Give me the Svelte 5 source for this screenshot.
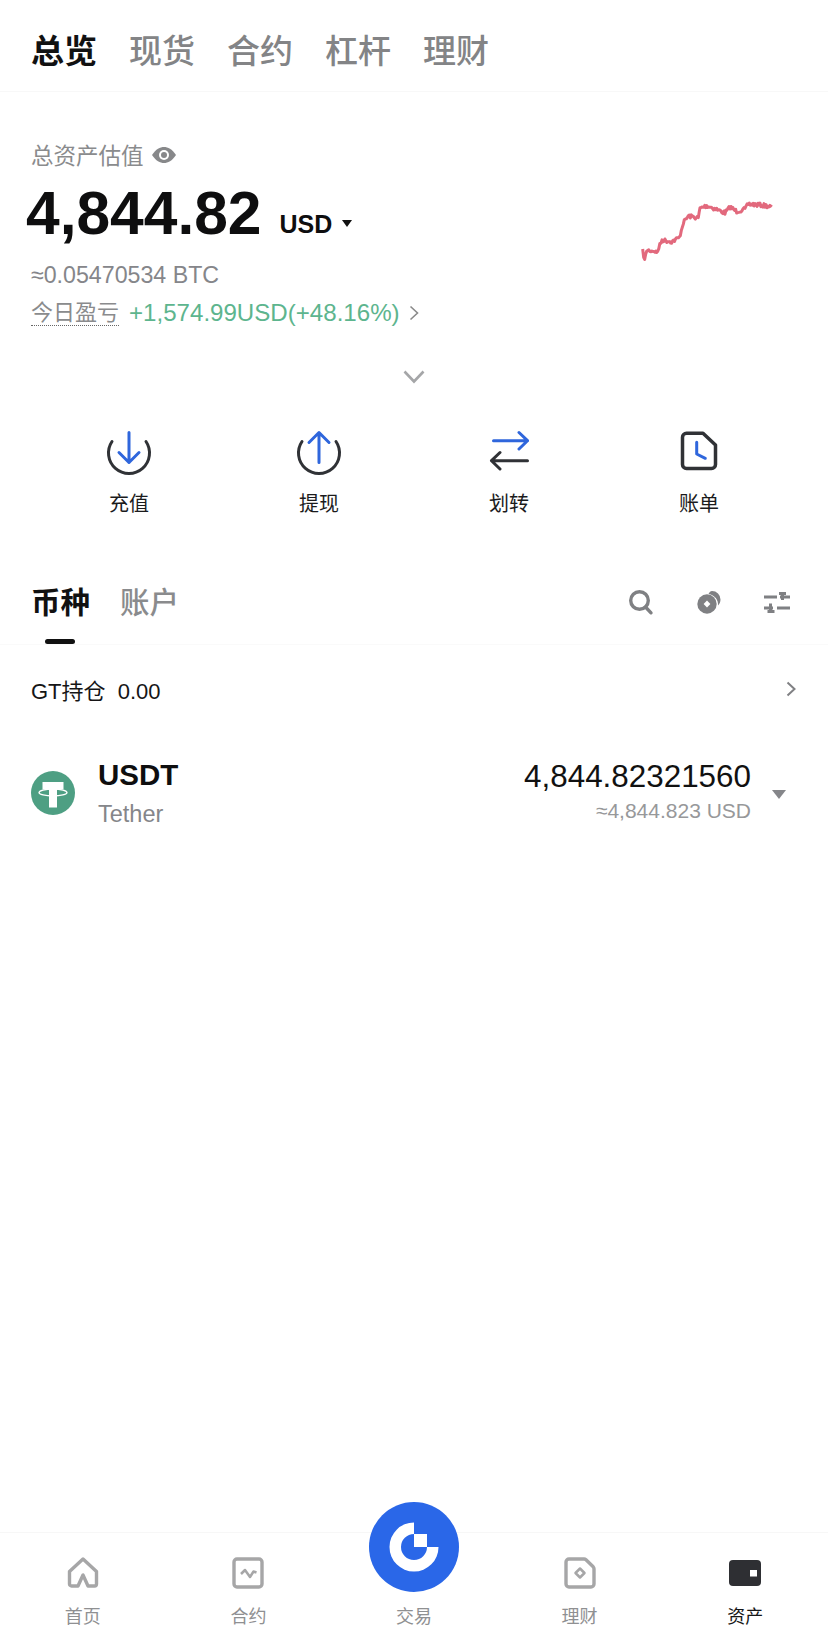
<script>
  const tabs = ['总览', '现货', '合约', '杠杆', '理财'];
  const anchors = [[128,240],[134,268],[140,238],[165,240],[170,246],[186,207],[215,212],[238,200],[250,155],[265,135],[295,141],[300,112],[320,104],[350,115],[375,126],[390,108],[410,121],[435,115],[445,99],[480,102],[510,106],[518,114]];
  let seed = 7;
  function rnd() { seed = (seed * 16807) % 2147483647; return seed / 2147483647 - 0.5; }
  let pts = [];
  for (let i = 0; i < anchors.length - 1; i++) {
    const [x1, y1] = anchors[i], [x2, y2] = anchors[i + 1];
    const n = Math.max(2, Math.round((x2 - x1) / 3));
    for (let k = 0; k < n; k++) {
      const t = k / n;
      pts.push(`${(x1 + (x2 - x1) * t).toFixed(1)},${(y1 + (y2 - y1) * t + rnd() * 12).toFixed(1)}`);
    }
  }
  const spark = pts.join(' ');
</script>

<div class="page">
  <header class="top">
    {#each tabs as t, i}
      <span class="top-tab" class:on={i === 0}>{t}</span>
    {/each}
  </header>

  <section class="hero">
    <div class="hero-main">
      <div class="label">
        <span>总资产估值</span>
        <svg class="eye" viewBox="0 0 26 18" width="26" height="18"><path d="M1 9C5 3 9 1 13 1s8 2 12 8c-4 6-8 8-12 8S5 15 1 9z" fill="#87888a"/><circle cx="13" cy="9" r="5" fill="#fff"/><circle cx="13" cy="9" r="3" fill="#87888a"/></svg>
      </div>
      <div class="amount">
        <span class="num">4,844.82</span>
        <span class="cur">USD</span>
        <i class="tri"></i>
      </div>
      <div class="btc">≈0.05470534 BTC</div>
      <div class="pl">
        <span class="pl-label">今日盈亏</span>
        <span class="pl-val">+1,574.99USD(+48.16%)</span>
        <svg viewBox="0 0 10 16" width="10" height="16"><path d="M1.5 1.5 8.5 8l-7 6.5" fill="none" stroke="#8a8a8a" stroke-width="1.6"/></svg>
      </div>
    </div>
    <svg class="spark" viewBox="0 0 228 120" width="228" height="120">
      <g transform="scale(0.3333)">
        <polyline points={spark} fill="none" stroke="#e2697d" stroke-width="9" stroke-linejoin="round" />
      </g>
    </svg>
  </section>

  <div class="expand">
    <svg viewBox="0 0 24 16" width="24" height="16"><path d="M2.5 2.5 12 12.5l9.500-10" fill="none" stroke="#a5a6a8" stroke-width="2.600"/></svg>
  </div>

  <section class="actions">
    <div class="action">
      <svg viewBox="0 0 48 48" width="48" height="48" fill="none" stroke-width="3" stroke-linecap="round" stroke-linejoin="round">
        <path d="M7 14.500A20.500 20.500 0 1 0 41 14.500" stroke="#303236"/>
        <path d="M24 5.500V35.500M14 25.500l10 10 10-10" stroke="#2f66dc"/>
      </svg>
      <span>充值</span>
    </div>
    <div class="action">
      <svg viewBox="0 0 48 48" width="48" height="48" fill="none" stroke-width="3" stroke-linecap="round" stroke-linejoin="round">
        <path d="M7 14.500A20.500 20.500 0 1 0 41 14.500" stroke="#303236"/>
        <path d="M24 35.500V5.500M14 15.500l10-10 10 10" stroke="#2f66dc"/>
      </svg>
      <span>提现</span>
    </div>
    <div class="action">
      <svg viewBox="0 0 48 48" width="48" height="48" fill="none" stroke-width="3" stroke-linecap="round" stroke-linejoin="round">
        <path d="M8.500 13.700H42.500M34 5.500l8.500 8.200L34 22" stroke="#2f66dc"/>
        <path d="M42.500 33.700H7M15 25.500l-8.500 8.200L15 42" stroke="#303236"/>
      </svg>
      <span>划转</span>
    </div>
    <div class="action">
      <svg viewBox="0 0 48 48" width="48" height="48" fill="none" stroke-width="3.500" stroke-linecap="round" stroke-linejoin="round">
        <path d="M11.500 6.200H28L40.500 18V37.500a4 4 0 0 1-4 4H11.500a4 4 0 0 1-4-4V10.200a4 4 0 0 1 4-4z" stroke="#303236"/>
        <path d="M21.700 15.300V27l8.600 4.300" stroke="#2f66dc" stroke-width="3"/>
      </svg>
      <span>账单</span>
    </div>
  </section>

  <section class="list-head">
    <div class="list-tabs">
      <span class="list-tab on">币种<i class="bar"></i></span>
      <span class="list-tab">账户</span>
    </div>
    <div class="tools">
      <svg viewBox="0 0 28 28" width="28" height="28" fill="none" stroke="#7f8083" stroke-width="3.400"><circle cx="12.500" cy="12.500" r="8.800"/><path d="M18.500 19 24 24.800" stroke-linecap="round"/></svg>
      <svg viewBox="0 0 28 28" width="28" height="28"><path d="M17 3a8.500 8.500 0 0 1 8.500 8.500c0 2.500-1 4.600-2.500 6 .6-5.500-3.200-10.500-9.500-11.500C14.500 4 15.500 3 17 3z" fill="#7f8083"/><circle cx="12" cy="16" r="9.700" fill="#7f8083"/><rect x="9.600" y="13.600" width="4.800" height="4.800" fill="#fff" transform="rotate(45 12 16)"/></svg>
      <svg viewBox="0 0 28 28" width="28" height="28" fill="#7f8083"><rect x="1" y="7.500" width="13" height="3"/><rect x="17" y="7.500" width="10" height="3"/><rect x="16" y="4" width="7" height="3"/><rect x="18" y="4" width="3" height="8"/><rect x="1" y="18.500" width="9" height="3"/><rect x="14" y="18.500" width="13" height="3"/><rect x="6" y="15.500" width="3" height="9"/><rect x="4.500" y="22" width="7" height="3"/></svg>
    </div>
  </section>

  <section class="gt">
    <span>GT持仓&nbsp; 0.00</span>
    <svg viewBox="0 0 10 16" width="10" height="16"><path d="M1.500 1.500 8.500 8l-7 6.500" fill="none" stroke="#808184" stroke-width="2"/></svg>
  </section>

  <section class="coin">
    <svg class="tether" viewBox="0 0 44 44" width="44" height="44">
      <circle cx="22" cy="22" r="22" fill="#4e9f83"/>
      <path d="M11.500 11h21v7.500H26v18h-8v-18h-6.500z" fill="#fff"/>
      <ellipse cx="22" cy="21.500" rx="14" ry="3.500" fill="none" stroke="#fff" stroke-width="1.300"/>
    </svg>
    <div class="coin-name">
      <div class="sym">USDT</div>
      <div class="full">Tether</div>
    </div>
    <div class="coin-val">
      <div class="bal">4,844.82321560</div>
      <div class="usd">≈4,844.823 USD</div>
    </div>
    <i class="tri2"></i>
  </section>

  <nav class="nav">
    <div class="nav-item">
      <svg viewBox="0 0 34 34" width="34" height="34" fill="none" stroke="#a6a6a7" stroke-width="3.400" stroke-linejoin="round"><path d="M3.500 15.500 17 3l13.500 12.500V28a2 2 0 0 1-2 2H22L17 19l-5 11H5.500a2 2 0 0 1-2-2z"/></svg>
      <span>首页</span>
    </div>
    <div class="nav-item">
      <svg viewBox="0 0 34 34" width="34" height="34" fill="none" stroke="#a6a6a7" stroke-width="3.400" stroke-linejoin="round"><rect x="3" y="3" width="28" height="28" rx="3"/><path d="M10 18l4-4 5 7 3.500-5.500 3 1" stroke-width="2.500"/></svg>
      <span>合约</span>
    </div>
    <div class="nav-item trade">
      <svg class="fab" viewBox="0 0 90 90" width="90" height="90">
        <circle cx="45" cy="45" r="45" fill="#2a67e8"/>
        <path d="M45 20.500A24.500 24.500 0 1 0 69.500 45H58A13 13 0 1 1 45 32z" fill="#fff"/>
        <rect x="45" y="32" width="13" height="13" fill="#fff"/>
      </svg>
      <span>交易</span>
    </div>
    <div class="nav-item">
      <svg viewBox="0 0 34 34" width="34" height="34" fill="none" stroke="#a6a6a7" stroke-width="3.400" stroke-linejoin="round"><path d="M6 3h15a3 3 0 0 1 2 .8l7.200 7a3 3 0 0 1 .8 2V28a3 3 0 0 1-3 3H6a3 3 0 0 1-3-3V6a3 3 0 0 1 3-3z"/><path d="M17 12.500l4.500 4.500-4.500 4.500-4.500-4.500z" stroke-width="2.500"/></svg>
      <span>理财</span>
    </div>
    <div class="nav-item on">
      <svg viewBox="0 0 34 34" width="34" height="34"><rect x="1" y="4" width="32" height="26" rx="4" fill="#2e2f33"/><rect x="22" y="14" width="7" height="6.500" fill="#fff"/></svg>
      <span>资产</span>
    </div>
  </nav>
</div>

<style>
  :global(body) { margin: 0; background: #fff; }
  .page {
    width: 828px;
    min-height: 1630px;
    display: flex;
    flex-direction: column;
    font-family: "Liberation Sans", "Noto Sans CJK SC", sans-serif;
    color: #0e0e0f;
    overflow: hidden;
  }
  .top {
    height: 92px;
    box-sizing: border-box;
    padding: 6px 0 0 31px;
    display: flex;
    align-items: center;
    gap: 32px;
    border-bottom: 1px solid #f8f8f8;
  }
  .top-tab { font-size: 33px; font-weight: 500; color: #838486; }
  .top-tab.on { color: #111; font-weight: 700; }

  .hero {
    padding: 47px 0 0 31px;
    display: flex;
    position: relative;
  }
  .hero-main { flex: 1; }
  .label {
    height: 30px;
    display: flex;
    align-items: center;
    gap: 7px;
    font-size: 22.500px;
    color: #8a8b8d;
  }
  .eye { margin-top: 2px; }
  .amount {
    margin: 14px 0 0 -5px;
    height: 60px;
    display: flex;
    align-items: center;
  }
  .num { font-size: 60.500px; font-weight: 700; line-height: 60px; color: #0e0e0f; }
  .cur { margin: 22px 0 0 18px; font-size: 25px; font-weight: 700; }
  .tri {
    margin: 21px 0 0 10px;
    width: 0;
    height: 0;
    border-left: 5px solid transparent;
    border-right: 5px solid transparent;
    border-top: 7px solid #111;
  }
  .btc { margin-top: 17px; height: 30px; line-height: 30px; font-size: 23.200px; color: #85868a; }
  .pl {
    margin-top: 8px;
    height: 30px;
    display: flex;
    align-items: center;
    font-size: 22px;
  }
  .pl-label { color: #8a8b8d; border-bottom: 1px dotted #666; line-height: 25px; }
  .pl-val { margin: 0 9px 0 10px; font-size: 24.100px; color: #5db58e; }
  .spark { position: absolute; right: 0; top: 79px; }

  .expand { margin-top: 41px; height: 16px; padding-left: 402px; }

  .actions {
    margin-top: 42px;
    padding: 0 34px;
    display: grid;
    grid-template-columns: repeat(4, 1fr);
  }
  .action {
    display: flex;
    flex-direction: column;
    align-items: center;
    gap: 13px;
    font-size: 20px;
    color: #1b1b1c;
  }

  .list-head {
    margin-top: 39px;
    height: 89px;
    padding: 0 37px 0 31px;
    display: flex;
    justify-content: space-between;
    align-items: center;
    position: relative;
    border-bottom: 1px solid #fafafa;
    box-sizing: border-box;
  }
  .list-tabs { display: flex; gap: 30px; }
  .list-tab { position: relative; font-size: 29.500px; font-weight: 500; color: #8a8b8d; }
  .list-tab.on { color: #111; font-weight: 700; }
  .bar {
    position: absolute;
    left: 14px;
    bottom: -23px;
    width: 30px;
    height: 5px;
    border-radius: 3px;
    background: #111;
  }
  .tools { display: flex; gap: 40px; margin-top: 4px; }

  .gt {
    height: 88px;
    padding: 0 32px 0 31px;
    display: flex;
    justify-content: space-between;
    align-items: center;
    font-size: 22px;
    color: #151516;
  }

  .coin {
    margin-top: 10px;
    height: 100px;
    padding: 0 42px 0 31px;
    display: flex;
    align-items: center;
  }
  .coin-name { margin-left: 23px; }
  .sym { font-size: 29.500px; font-weight: 700; line-height: 36px; color: #0e0e0f; }
  .full { margin-top: 6px; font-size: 23.500px; font-weight: 500; line-height: 30px; color: #85868a; }
  .coin-val { margin-left: auto; text-align: right; }
  .bal { font-size: 31.400px; line-height: 36px; color: #111; }
  .usd { font-size: 21px; line-height: 32px; color: #97989a; }
  .tri2 {
    margin: 3px 0 0 21px;
    width: 0;
    height: 0;
    border-left: 7px solid transparent;
    border-right: 7px solid transparent;
    border-top: 9px solid #85868a;
  }

  .nav {
    margin-top: auto;
    height: 98px;
    box-sizing: border-box;
    padding-top: 23px;
    display: grid;
    grid-template-columns: repeat(5, 1fr);
    border-top: 1px solid #f7f7f7;
  }
  .nav-item {
    position: relative;
    display: flex;
    flex-direction: column;
    align-items: center;
    justify-content: space-between;
    height: 74px;
    font-size: 18px;
    color: #8f9092;
  }
  .nav-item.on { color: #161617; }
  .nav-item span { margin-top: auto; line-height: 26px; }
  .fab { position: absolute; left: 50%; top: -54px; margin-left: -45px; }
</style>
